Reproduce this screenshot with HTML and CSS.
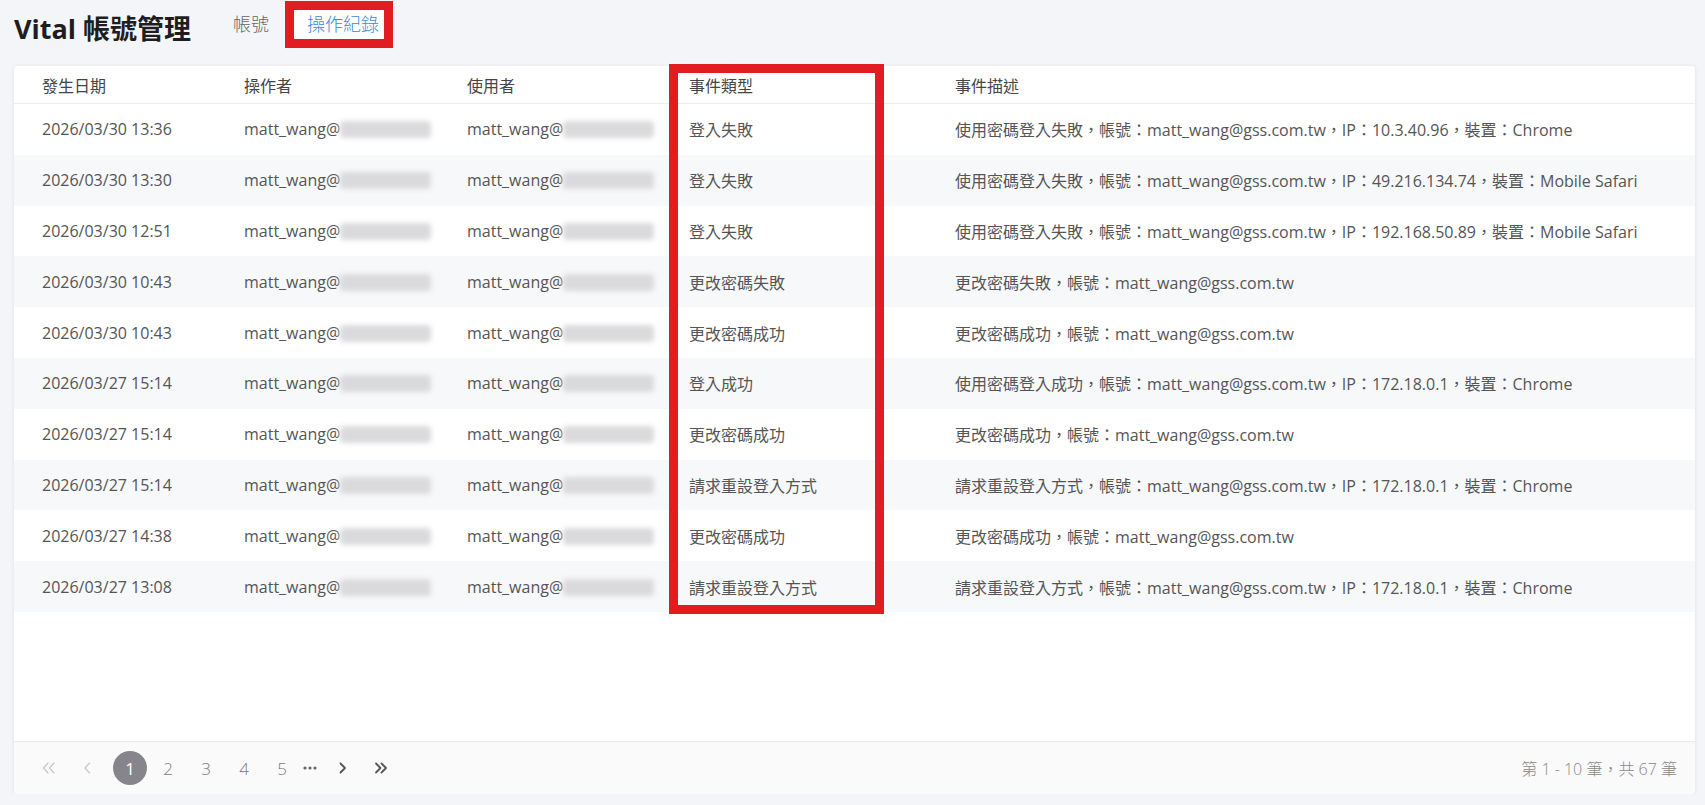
FILE: index.html
```html
<!DOCTYPE html>
<html>
<head>
  <meta charset="utf-8">
  <title>Vital 帳號管理</title>
  <link rel="stylesheet" href="styles.css">
</head>
<body>
  <div class="header">
    <h1 class="title">Vital 帳號管理</h1>
    <div class="tabs">
      <div class="tab">帳號</div>
      <div class="tab active">操作紀錄</div>
    </div>
  </div>

  <div class="card">
    <div class="table-area">
      <table class="log-table">
        <colgroup>
          <col class="col-date">
          <col class="col-op">
          <col class="col-user">
          <col class="col-type">
          <col>
        </colgroup>
        <thead>
          <tr>
            <th>發生日期</th>
            <th>操作者</th>
            <th>使用者</th>
            <th>事件類型</th>
            <th>事件描述</th>
          </tr>
        </thead>
        <tbody>
          <tr>
            <td>2026/03/30 13:36</td>
            <td>matt_wang@<span class="blur"></span></td>
            <td>matt_wang@<span class="blur"></span></td>
            <td>登入失敗</td>
            <td>使用密碼登入失敗，帳號：matt_wang@gss.com.tw，IP：10.3.40.96，裝置：Chrome</td>
          </tr>
          <tr>
            <td>2026/03/30 13:30</td>
            <td>matt_wang@<span class="blur"></span></td>
            <td>matt_wang@<span class="blur"></span></td>
            <td>登入失敗</td>
            <td>使用密碼登入失敗，帳號：matt_wang@gss.com.tw，IP：49.216.134.74，裝置：Mobile Safari</td>
          </tr>
          <tr>
            <td>2026/03/30 12:51</td>
            <td>matt_wang@<span class="blur"></span></td>
            <td>matt_wang@<span class="blur"></span></td>
            <td>登入失敗</td>
            <td>使用密碼登入失敗，帳號：matt_wang@gss.com.tw，IP：192.168.50.89，裝置：Mobile Safari</td>
          </tr>
          <tr>
            <td>2026/03/30 10:43</td>
            <td>matt_wang@<span class="blur"></span></td>
            <td>matt_wang@<span class="blur"></span></td>
            <td>更改密碼失敗</td>
            <td>更改密碼失敗，帳號：matt_wang@gss.com.tw</td>
          </tr>
          <tr>
            <td>2026/03/30 10:43</td>
            <td>matt_wang@<span class="blur"></span></td>
            <td>matt_wang@<span class="blur"></span></td>
            <td>更改密碼成功</td>
            <td>更改密碼成功，帳號：matt_wang@gss.com.tw</td>
          </tr>
          <tr>
            <td>2026/03/27 15:14</td>
            <td>matt_wang@<span class="blur"></span></td>
            <td>matt_wang@<span class="blur"></span></td>
            <td>登入成功</td>
            <td>使用密碼登入成功，帳號：matt_wang@gss.com.tw，IP：172.18.0.1，裝置：Chrome</td>
          </tr>
          <tr>
            <td>2026/03/27 15:14</td>
            <td>matt_wang@<span class="blur"></span></td>
            <td>matt_wang@<span class="blur"></span></td>
            <td>更改密碼成功</td>
            <td>更改密碼成功，帳號：matt_wang@gss.com.tw</td>
          </tr>
          <tr>
            <td>2026/03/27 15:14</td>
            <td>matt_wang@<span class="blur"></span></td>
            <td>matt_wang@<span class="blur"></span></td>
            <td>請求重設登入方式</td>
            <td>請求重設登入方式，帳號：matt_wang@gss.com.tw，IP：172.18.0.1，裝置：Chrome</td>
          </tr>
          <tr>
            <td>2026/03/27 14:38</td>
            <td>matt_wang@<span class="blur"></span></td>
            <td>matt_wang@<span class="blur"></span></td>
            <td>更改密碼成功</td>
            <td>更改密碼成功，帳號：matt_wang@gss.com.tw</td>
          </tr>
          <tr>
            <td>2026/03/27 13:08</td>
            <td>matt_wang@<span class="blur"></span></td>
            <td>matt_wang@<span class="blur"></span></td>
            <td>請求重設登入方式</td>
            <td>請求重設登入方式，帳號：matt_wang@gss.com.tw，IP：172.18.0.1，裝置：Chrome</td>
          </tr>
        </tbody>
      </table>
      <div class="column-mark"></div>
    </div>

    <div class="pager">
      <div class="pages">
        <span class="page-btn disabled">
          <svg width="14" height="12" viewBox="0 0 14 12"><polyline points="6,1 1.5,6 6,11" /><polyline points="12,1 7.5,6 12,11" /></svg>
        </span>
        <span class="page-btn disabled">
          <svg width="8" height="12" viewBox="0 0 8 12"><polyline points="6.5,1 2,6 6.5,11" /></svg>
        </span>
        <span class="page-num current">1</span>
        <span class="page-num">2</span>
        <span class="page-num">3</span>
        <span class="page-num">4</span>
        <span class="page-num">5</span>
        <span class="page-more">
          <svg width="14" height="4" viewBox="0 0 14 4"><circle cx="2" cy="2" r="1.6" /><circle cx="7" cy="2" r="1.6" /><circle cx="12" cy="2" r="1.6" /></svg>
        </span>
        <span class="page-btn next">
          <svg width="8" height="12" viewBox="0 0 8 12"><polyline points="1.5,1.5 6,6 1.5,10.5" /></svg>
        </span>
        <span class="page-btn">
          <svg width="14" height="12" viewBox="0 0 14 12"><polyline points="2,1.5 6.5,6 2,10.5" /><polyline points="7.5,1.5 12,6 7.5,10.5" /></svg>
        </span>
      </div>
      <div class="total">第 1 - 10 筆，共 67 筆</div>
    </div>
  </div>
</body>
</html>
```

FILE: styles.css
```css
body {
  margin: 0;
  background-color: #f4f5f9;
  font-family: "Open Sans", "Noto Sans CJK TC", sans-serif;
  color: #555555;
}

.header {
  display: flex;
  align-items: flex-start;
  height: 66px;
  padding-left: 14px;
  box-sizing: border-box;
}

.title {
  margin: 15px 0 0 0;
  font-size: 27px;
  line-height: 28px;
  font-weight: 700;
  color: #1e1e1e;
}

.tabs {
  display: flex;
  gap: 38px;
  margin: 15px 0 0 42px;
}

.tab {
  font-size: 18px;
  line-height: 19px;
  font-weight: 300;
  color: #666666;
}

.tab.active {
  position: relative;
  z-index: 0;
  color: #3a8bd2;
}

/* red annotation box around the active tab */
.tab.active::before {
  content: "";
  position: absolute;
  left: -22px;
  right: -14px;
  top: -14px;
  bottom: -14px;
  border: 9px solid #e11d22;
  background-color: #ffffff;
  z-index: -1;
}

.card {
  display: flex;
  flex-direction: column;
  height: 728px;
  margin: 0 10px 0 14px;
  background-color: #ffffff;
  border-radius: 4px;
  box-shadow: 0 1px 5px rgba(0, 0, 0, 0.08);
}

.table-area {
  position: relative;
  flex: 1;
}

.log-table {
  width: 100%;
  border-collapse: collapse;
  table-layout: fixed;
  font-size: 16px;
}

.col-date {
  width: 230px;
}

.col-op {
  width: 223px;
}

.col-user {
  width: 222px;
}

.col-type {
  width: 266px;
}

.log-table th {
  height: 37px;
  padding: 0;
  text-align: left;
  font-weight: 400;
  color: #454545;
  border-bottom: 1px solid #ebedf2;
}

.log-table td {
  height: 50.8px;
  padding: 0;
  white-space: nowrap;
  color: #555555;
}

.log-table th:first-child,
.log-table td:first-child {
  padding-left: 28px;
}

.log-table tbody tr:nth-child(even) {
  background-color: #f7f8fa;
}

.blur {
  display: inline-block;
  width: 91px;
  height: 17px;
  vertical-align: -3px;
  background-color: #dadadc;
  border-radius: 4px;
  filter: blur(2.5px);
}

/* red annotation box around the event type column */
.column-mark {
  position: absolute;
  left: 655px;
  top: -2px;
  width: 215px;
  height: 550px;
  box-sizing: border-box;
  border: 9px solid #e11d22;
}

.pager {
  display: flex;
  align-items: center;
  justify-content: space-between;
  height: 52px;
  padding: 0 18px;
  border-top: 1px solid #ebebeb;
  background-color: #fafafa;
  border-radius: 0 0 4px 4px;
}

.pages {
  display: flex;
  align-items: center;
  gap: 4px;
}

.page-btn,
.page-num {
  display: flex;
  align-items: center;
  justify-content: center;
  width: 34px;
  height: 34px;
}

.page-num {
  font-size: 17px;
  font-weight: 300;
  color: #7a7a7a;
}

.page-num.current {
  margin-left: 5px;
  border-radius: 50%;
  background-color: #85858b;
  color: #ffffff;
  font-weight: 400;
}

.page-more {
  display: flex;
  align-items: center;
  width: 14px;
  height: 34px;
}

.page-more svg {
  fill: #666666;
}

.page-btn svg {
  fill: none;
  stroke: #555555;
  stroke-width: 1.8;
  stroke-linecap: round;
  stroke-linejoin: round;
}

.page-btn.disabled svg {
  stroke: #c9c9cc;
  stroke-width: 1.3;
}

.page-btn.next {
  margin-left: 5px;
}

.total {
  font-size: 16px;
  font-weight: 300;
  color: #888888;
}
```
